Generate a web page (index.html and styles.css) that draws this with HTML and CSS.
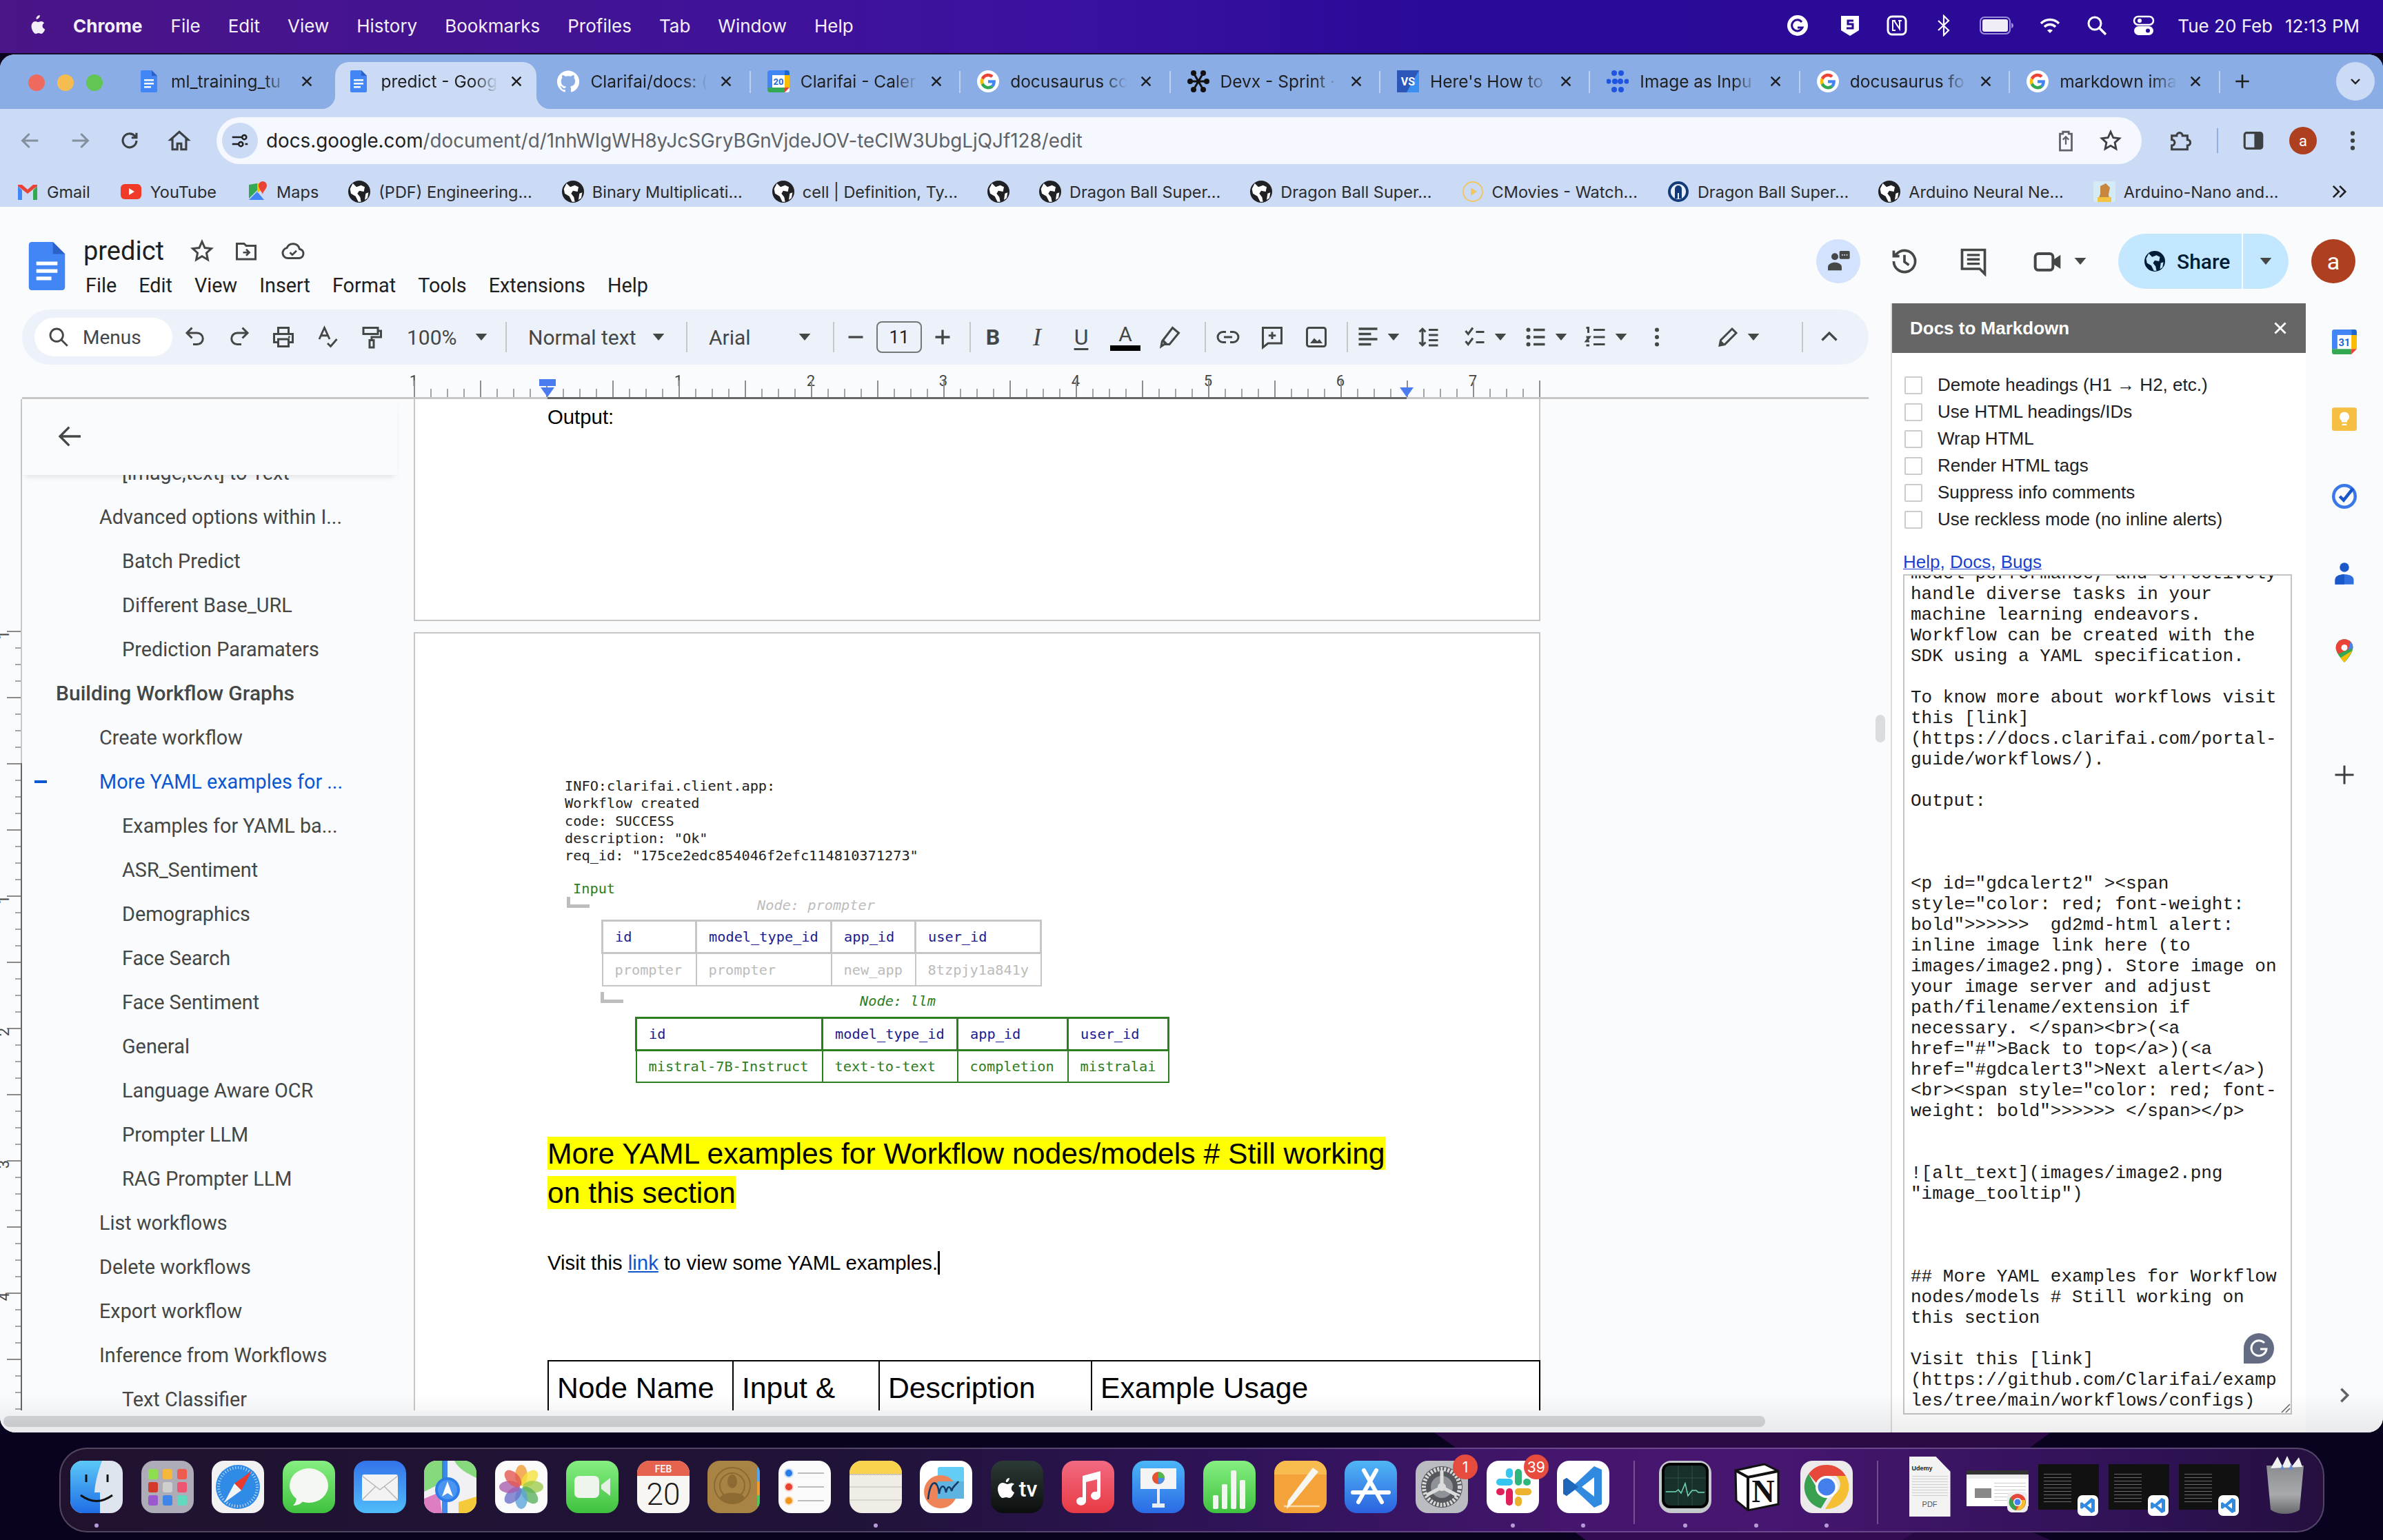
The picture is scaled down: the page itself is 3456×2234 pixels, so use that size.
FILE: index.html
```html
<!DOCTYPE html>
<html lang="en">
<head>
  <meta charset="UTF-8" />
  <title>predict - Google Docs</title>
  <link rel="stylesheet" href="styles.css">
</head>
<body>
  <svg class="sprite" xmlns="http://www.w3.org/2000/svg">
    <symbol id="i-g" viewBox="0 0 48 48">
      <circle cx="24" cy="24" r="24" fill="#fff"/>
      <g transform="translate(7 7) scale(.71)">
        <path fill="#EA4335" d="M24 9.5c3.54 0 6.71 1.22 9.21 3.6l6.85-6.85C35.9 2.38 30.47 0 24 0 14.62 0 6.51 5.38 2.56 13.22l7.98 6.19C12.43 13.72 17.74 9.5 24 9.5z"/>
        <path fill="#4285F4" d="M46.98 24.55c0-1.57-.15-3.09-.38-4.55H24v9.02h12.94c-.58 2.96-2.26 5.48-4.78 7.18l7.73 6c4.51-4.18 7.09-10.36 7.09-17.65z"/>
        <path fill="#FBBC05" d="M10.53 28.59c-.48-1.45-.76-2.99-.76-4.59s.27-3.14.76-4.59l-7.98-6.19C.92 16.46 0 20.12 0 24c0 3.88.92 7.54 2.56 10.78l7.97-6.19z"/>
        <path fill="#34A853" d="M24 48c6.48 0 11.93-2.13 15.89-5.81l-7.73-6c-2.15 1.45-4.92 2.3-8.16 2.3-6.26 0-11.57-4.22-13.47-9.91l-7.98 6.19C6.51 42.62 14.62 48 24 48z"/>
      </g>
    </symbol>
    <symbol id="i-doc" viewBox="0 0 24 32">
      <path fill="#4285f4" d="M2 0h14l8 8v22a2 2 0 0 1-2 2H2a2 2 0 0 1-2-2V2a2 2 0 0 1 2-2z"/>
      <path fill="#2b62c8" d="M16 0l8 8h-8z"/>
      <path fill="#fff" d="M5 13h14v2.400H5zM5 18h14v2.400H5zM5 23h10v2.400H5z"/>
    </symbol>
    <symbol id="i-globe" viewBox="0 0 24 24">
      <circle cx="12" cy="12" r="12" fill="#202124"/>
      <path fill="#fff" d="M5 3l4 4 5-2 4 2-1 5-5-1-2 3 3 4 1 5-3 0-3-6-5-3-1-5zM19 14l3-1-1 6-3 2z"/>
    </symbol>
    <symbol id="i-share-globe" viewBox="0 0 24 24">
      <circle cx="12" cy="12" r="12" fill="#001d35"/>
      <path fill="#c2e7ff" d="M5 3l4 4 5-2 4 2-1 5-5-1-2 3 3 4 1 5-3 0-3-6-5-3-1-5zM19 14l3-1-1 6-3 2z"/>
    </symbol>
    <symbol id="i-vsc" viewBox="0 0 30 30">
      <rect width="30" height="30" rx="7" fill="#fff"/>
      <path d="M20 4l5 2.500v17L20 26 10 17l-4 3-2-1.500v-7L6 10l4 3z" fill="#2f8ae0"/>
      <path d="M20 10.500v9L14 15z" fill="#fff"/>
    </symbol>
    <symbol id="i-caret" viewBox="0 0 10 6"><path d="M0 0h10L5 6z" fill="#444746"/></symbol>
    <symbol id="i-x" viewBox="0 0 24 24"><path d="M5 5l14 14M19 5L5 19" fill="none" stroke="currentColor" stroke-width="2.600"/></symbol>
    <symbol id="i-star" viewBox="0 0 24 24"><path d="M12 3l2.700 6 6.300.7-4.700 4.300 1.300 6.500L12 17.200 6.400 20.500 7.700 14 3 9.700 9.300 9z" fill="none" stroke="currentColor" stroke-width="2"/></symbol>
  </svg>

  <div class="menubar">
    <svg class="apple" viewBox="0 0 24 28"><path fill="#f3eff8" d="M16.500 0c.2 2.900-2.200 5.600-5 5.400-.3-2.800 2.300-5.300 5-5.400zM20 14.800c0-2.800 2.300-4.100 2.400-4.200-1.300-1.900-3.300-2.200-4-2.200-1.700-.2-3.300 1-4.200 1-.9 0-2.200-1-3.600-1-1.900 0-3.600 1.100-4.600 2.800-2 3.400-.5 8.400 1.400 11.200 1 1.300 2.100 2.900 3.600 2.800 1.400-.1 2-.9 3.700-.9s2.200.9 3.700.9 2.500-1.400 3.500-2.800c1.100-1.600 1.500-3.100 1.600-3.200-.1 0-3.500-1.300-3.500-4.400z"/></svg>
    <span class="mb-app">Chrome</span>
    <span class="mb-item">File</span>
    <span class="mb-item">Edit</span>
    <span class="mb-item">View</span>
    <span class="mb-item">History</span>
    <span class="mb-item">Bookmarks</span>
    <span class="mb-item">Profiles</span>
    <span class="mb-item">Tab</span>
    <span class="mb-item">Window</span>
    <span class="mb-item">Help</span>
    <div class="mb-status">
      <svg class="st st-first" viewBox="0 0 32 32"><circle cx="16" cy="16" r="15" fill="#fff"/><path d="M22 11a8 8 0 1 0 1 8h-7" fill="none" stroke="#2b0a96" stroke-width="3"/></svg>
      <svg class="st" viewBox="0 0 32 32"><path fill="#fff" d="M3 2h26v21l-13 8-13-8z"/><path d="M21 9h-8v5h7v6h-9" fill="none" stroke="#2b0a96" stroke-width="3"/></svg>
      <svg class="st" viewBox="0 0 32 32"><rect x="3" y="3" width="26" height="26" rx="6" fill="none" stroke="#fff" stroke-width="3"/><path d="M10 23V9h2l8 12V9M10 9h4M18 9h5M9 23h5" fill="none" stroke="#fff" stroke-width="2"/></svg>
      <svg class="st" viewBox="0 0 32 32"><path d="M8 9l15 14-7 7V2l7 7L8 23" fill="none" stroke="#fff" stroke-width="2.200"/></svg>
      <svg class="st-batt" viewBox="0 0 50 26"><rect x="1" y="1" width="43" height="24" rx="6" fill="none" stroke="#9a8fd8" stroke-width="2"/><rect x="4" y="4" width="37" height="18" rx="3" fill="#f1edf7"/><path d="M46 9c2 1 3 2 3 4s-1 3-3 4z" fill="#9a8fd8"/></svg>
      <svg class="st" viewBox="0 0 32 32"><path d="M3 13a18 18 0 0 1 26 0M8 18a11 11 0 0 1 16 0" fill="none" stroke="#fff" stroke-width="3.400"/><path d="M12 23a6 6 0 0 1 8 0l-4 4z" fill="#fff"/></svg>
      <svg class="st" viewBox="0 0 32 32"><circle cx="13" cy="13" r="9" fill="none" stroke="#fff" stroke-width="3"/><path d="M20 20l9 9" stroke="#fff" stroke-width="3.400"/></svg>
      <svg class="st" viewBox="0 0 32 32"><rect x="2" y="3" width="28" height="12" rx="6" fill="none" stroke="#fff" stroke-width="2.500"/><circle cx="10" cy="9" r="3" fill="#fff"/><rect x="2" y="17" width="28" height="13" rx="6.500" fill="#fff"/><circle cx="22" cy="23.500" r="3" fill="#2b0a96"/></svg>
      <span class="mb-clock">Tue 20 Feb</span>
      <span class="mb-clock">12:13 PM</span>
    </div>
  </div>

  <div class="window">
    <div class="tabstrip">
      <div class="lights"><i class="red"></i><i class="yellow"></i><i class="green"></i></div>
      <div class="tabs">
        <div class="tab"><svg class="fav"><use href="#i-doc"/></svg><span class="tab-title">ml_training_tu</span><svg class="tab-x"><use href="#i-x"/></svg></div>
        <div class="tab active"><svg class="fav"><use href="#i-doc"/></svg><span class="tab-title">predict - Goog</span><svg class="tab-x"><use href="#i-x"/></svg></div>
        <div class="tab sep"><svg class="fav" viewBox="0 0 24 24"><path fill="#fff" d="M12 .3a12 12 0 0 0-3.800 23.400c.6.1.8-.3.8-.6v-2c-3.300.7-4-1.600-4-1.600-.6-1.400-1.400-1.800-1.400-1.800-1-.7.1-.7.1-.7 1.200 0 1.900 1.200 1.900 1.200 1 1.800 2.800 1.300 3.500 1 0-.8.4-1.300.7-1.600-2.700-.3-5.500-1.300-5.500-6 0-1.200.5-2.300 1.300-3.100-.2-.4-.6-1.600 0-3.200 0 0 1-.3 3.400 1.200a11.500 11.500 0 0 1 6 0c2.300-1.500 3.300-1.200 3.300-1.200.6 1.600.2 2.800 0 3.200.9.8 1.300 1.900 1.300 3.200 0 4.600-2.800 5.600-5.500 5.900.5.4.9 1 .9 2.200v3.300c0 .3.1.7.8.6A12 12 0 0 0 12 .3"/></svg><span class="tab-title">Clarifai/docs: (</span><svg class="tab-x"><use href="#i-x"/></svg></div>
        <div class="tab sep"><svg class="fav" viewBox="0 0 32 32"><rect width="32" height="32" rx="3" fill="#fff"/><path fill="#4285f4" d="M0 3a3 3 0 0 1 3-3h22v7H7v18H0z"/><path fill="#34a853" d="M0 25h25v7H3a3 3 0 0 1-3-3z"/><path fill="#fbbc04" d="M25 7h7v18h-7z"/><path fill="#ea4335" d="M25 25h7l-7 7z"/><path fill="#1967d2" d="M25 0h4a3 3 0 0 1 3 3v4h-7z"/><text x="16" y="21" class="cal-num">20</text></svg><span class="tab-title">Clarifai - Caler</span><svg class="tab-x"><use href="#i-x"/></svg></div>
        <div class="tab sep"><svg class="fav"><use href="#i-g"/></svg><span class="tab-title">docusaurus cc</span><svg class="tab-x"><use href="#i-x"/></svg></div>
        <div class="tab sep"><svg class="fav" viewBox="0 0 32 32"><path d="M9 4l14 24M23 4L9 28M5 16h22" stroke="#111" stroke-width="3"/><g fill="#111"><circle cx="9" cy="4" r="4"/><circle cx="23" cy="4" r="4"/><circle cx="4" cy="16" r="4"/><circle cx="28" cy="16" r="4"/><circle cx="9" cy="28" r="4"/><circle cx="23" cy="28" r="4"/></g></svg><span class="tab-title">Devx - Sprint ·</span><svg class="tab-x"><use href="#i-x"/></svg></div>
        <div class="tab sep"><svg class="fav" viewBox="0 0 32 32"><rect width="32" height="32" fill="#3a8ff0"/><path d="M0 0h32L14 32H0z" fill="#2c57b8"/><text x="16" y="22" class="vs-num">VS</text></svg><span class="tab-title">Here's How to</span><svg class="tab-x"><use href="#i-x"/></svg></div>
        <div class="tab sep"><svg class="fav" viewBox="0 0 32 32"><g fill="#1d55e0"><circle cx="11" cy="4" r="4"/><circle cx="21" cy="4" r="4"/><circle cx="3" cy="16" r="3.500"/><circle cx="12" cy="16" r="4"/><circle cx="20" cy="16" r="4"/><circle cx="29" cy="16" r="3.500"/><circle cx="11" cy="28" r="4"/><circle cx="21" cy="28" r="4"/></g></svg><span class="tab-title">Image as Inpu</span><svg class="tab-x"><use href="#i-x"/></svg></div>
        <div class="tab sep"><svg class="fav"><use href="#i-g"/></svg><span class="tab-title">docusaurus fo</span><svg class="tab-x"><use href="#i-x"/></svg></div>
        <div class="tab sep"><svg class="fav"><use href="#i-g"/></svg><span class="tab-title">markdown ima</span><svg class="tab-x"><use href="#i-x"/></svg></div>
      </div>
      <svg class="newtab" viewBox="0 0 24 24"><path d="M12 3v18M3 12h18" stroke="#1f1f1f" stroke-width="2.400"/></svg>
      <div class="tab-more"><svg viewBox="0 0 24 24"><path d="M6 9l6 6 6-6" fill="none" stroke="#1f1f1f" stroke-width="2.400"/></svg></div>
    </div>

    <div class="navbar">
      <svg class="nav faded" viewBox="0 0 24 24"><path d="M20 12H5M11 5l-7 7 7 7" fill="none" stroke="currentColor" stroke-width="2.200"/></svg>
      <svg class="nav faded" viewBox="0 0 24 24"><path d="M4 12h15M13 5l7 7-7 7" fill="none" stroke="currentColor" stroke-width="2.200"/></svg>
      <svg class="nav" viewBox="0 0 24 24"><path d="M19 12a7 7 0 1 1-2-5l2 2M19 4v5h-5" fill="none" stroke="currentColor" stroke-width="2.200"/></svg>
      <svg class="nav" viewBox="0 0 24 24"><path d="M12 3l9 8h-2v10h-5v-6h-4v6H5V11H3z" fill="none" stroke="currentColor" stroke-width="2.200"/></svg>
      <div class="omnibox">
        <span class="site-ic"><svg viewBox="0 0 24 24"><path d="M3 8h11M18 16h3M3 16h7" stroke="#1f1f1f" stroke-width="2"/><circle cx="17" cy="8" r="2.500" fill="none" stroke="#1f1f1f" stroke-width="2"/><circle cx="13" cy="16" r="2.500" fill="none" stroke="#1f1f1f" stroke-width="2"/></svg></span>
        <span class="url">docs.google.com<span class="url-path">/document/d/1nhWIgWH8yJcSGryBGnVjdeJOV-teCIW3UbgLjQJf128/edit</span></span>
        <svg class="omni-ic" viewBox="0 0 24 24"><path d="M6 5h3V3h6v2h3v17H6z" fill="none" stroke="#5f6368" stroke-width="2"/><path d="M12 16V8M9 11l3-3 3 3" fill="none" stroke="#5f6368" stroke-width="1.600"/></svg>
        <svg class="omni-ic star-ic"><use href="#i-star"/></svg>
      </div>
      <svg class="nav puzzle" viewBox="0 0 24 24"><path d="M4 7h5a3 3 0 0 1 6 0h5v4a3 3 0 0 1 0 6v4H4v-4a3 3 0 0 0 0-6z" fill="none" stroke="currentColor" stroke-width="2.200"/></svg>
      <i class="nav-sep"></i>
      <svg class="nav" viewBox="0 0 24 24"><rect x="3" y="4" width="18" height="16" rx="2" fill="none" stroke="currentColor" stroke-width="2.200"/><rect x="13" y="4" width="8" height="16" fill="currentColor"/></svg>
      <span class="avatar small">a</span>
      <svg class="nav dots" viewBox="0 0 24 24"><g fill="currentColor"><circle cx="12" cy="4.500" r="2.200"/><circle cx="12" cy="12" r="2.200"/><circle cx="12" cy="19.500" r="2.200"/></g></svg>
    </div>

    <div class="bookmarks">
      <span class="bm"><svg class="bm-ic" viewBox="0 0 32 32"><path fill="#4285f4" d="M2 8v20h6V14z"/><path fill="#34a853" d="M24 14v14h6V8z"/><path fill="#ea4335" d="M2 8l14 11L30 8v-2l-6 0-8 7-8-7-6 0z"/></svg>Gmail</span>
      <span class="bm"><svg class="bm-ic" viewBox="0 0 32 32"><rect x="1" y="5" width="30" height="22" rx="6" fill="#f03a27"/><path d="M13 11l8 5-8 5z" fill="#fff"/></svg>YouTube</span>
      <span class="bm"><svg class="bm-ic" viewBox="0 0 32 32"><path fill="#35a853" d="M4 6l12-2v10L4 26z"/><path fill="#4285f4" d="M4 28l12-12 10 12z"/><path fill="#fbbc04" d="M16 4h8v8l-8 6z"/><path fill="#ea4335" d="M24 1a6 6 0 0 1 6 6c0 5-6 9-6 13-1-4-6-8-6-13a6 6 0 0 1 6-6z"/></svg>Maps</span>
      <span class="bm"><svg class="bm-ic"><use href="#i-globe"/></svg>(PDF) Engineering...</span>
      <span class="bm"><svg class="bm-ic"><use href="#i-globe"/></svg>Binary Multiplicati...</span>
      <span class="bm"><svg class="bm-ic"><use href="#i-globe"/></svg>cell | Definition, Ty...</span>
      <span class="bm"><svg class="bm-ic"><use href="#i-globe"/></svg></span>
      <span class="bm"><svg class="bm-ic"><use href="#i-globe"/></svg>Dragon Ball Super...</span>
      <span class="bm"><svg class="bm-ic"><use href="#i-globe"/></svg>Dragon Ball Super...</span>
      <span class="bm"><svg class="bm-ic" viewBox="0 0 32 32"><circle cx="16" cy="16" r="14" fill="none" stroke="#efc663" stroke-width="2"/><path d="M13 10l9 6-9 6z" fill="#efc663"/></svg>CMovies - Watch...</span>
      <span class="bm"><svg class="bm-ic" viewBox="0 0 32 32"><circle cx="16" cy="16" r="15" fill="#123a78"/><circle cx="16" cy="16" r="11" fill="#e8eefb"/><path d="M11 26V12a5 5 0 0 1 10 0v14h-4v-8h-2v8z" fill="#123a78"/></svg>Dragon Ball Super...</span>
      <span class="bm"><svg class="bm-ic"><use href="#i-globe"/></svg>Arduino Neural Ne...</span>
      <span class="bm"><svg class="bm-ic" viewBox="0 0 32 32"><rect y="1" width="32" height="30" rx="3" fill="#d4eaf4"/><path d="M10 8l8-4 6 6-2 10 2 11H6l4-12z" fill="#c7853e"/><path d="M6 24h20v7H6z" fill="#f3c343"/></svg>Arduino-Nano and...</span>
      <svg class="bm-more" viewBox="0 0 24 24"><path d="M5 5l7 7-7 7M13 5l7 7-7 7" fill="none" stroke="#1f1f1f" stroke-width="2.200"/></svg>
    </div>

    <div class="docs">
      <header class="docs-head">
        <svg class="docs-logo"><use href="#i-doc"/></svg>
        <div class="docs-titles">
          <div class="docs-title">
            <span class="doc-name">predict</span>
            <svg class="head-ic"><use href="#i-star"/></svg>
            <svg class="head-ic" viewBox="0 0 24 24"><path d="M3 5h7l2 2h9v13H3z" fill="none" stroke="currentColor" stroke-width="2"/><path d="M9 13.500h6M12 10.500l3 3-3 3" fill="none" stroke="currentColor" stroke-width="1.800"/></svg>
            <svg class="head-ic" viewBox="0 0 24 24"><path d="M7 19a5 5 0 0 1-1-9.900 6.500 6.500 0 0 1 12.300 1A4.500 4.500 0 0 1 18 19z" fill="none" stroke="currentColor" stroke-width="2"/><path d="M9 13.500l2.300 2.300 4-4" fill="none" stroke="currentColor" stroke-width="1.800"/></svg>
          </div>
          <nav class="docs-menu">
            <span>File</span><span>Edit</span><span>View</span><span>Insert</span><span>Format</span><span>Tools</span><span>Extensions</span><span>Help</span>
          </nav>
        </div>
        <div class="head-right">
          <span class="presence"><svg viewBox="0 0 24 24"><circle cx="9" cy="8" r="3" fill="#444746"/><path d="M3 20v-3c0-2.500 3-4 6-4s6 1.500 6 4v3z" fill="#444746"/><rect x="13" y="3" width="9" height="7" rx="1" fill="#444746"/><path d="M15 6.500h5" stroke="#d3e3fd" stroke-dasharray="1 1"/></svg></span>
          <svg class="hr-ic hist" viewBox="0 0 24 24"><path d="M3.500 12a8.500 8.500 0 1 0 2.700-6.200L3.500 8M3.500 3.500V8H8M12 7v5.500l3.500 2.500" fill="none" stroke="#444746" stroke-width="2"/></svg>
          <svg class="hr-ic cmt" viewBox="0 0 24 24"><path d="M3 3h18v19l-4-4H3z" fill="none" stroke="#444746" stroke-width="2"/><path d="M7 7h10M7 10.500h10M7 14h10" stroke="#444746" stroke-width="1.800"/></svg>
          <svg class="hr-ic meet" viewBox="0 0 24 24"><rect x="2" y="6" width="14" height="13" rx="2.500" fill="none" stroke="#444746" stroke-width="2.200"/><path d="M16 11l6-4v11l-6-4z" fill="#444746"/></svg>
          <svg class="caret meet-caret"><use href="#i-caret"/></svg>
          <div class="share">
            <span class="share-main"><svg class="share-ic"><use href="#i-share-globe"/></svg>Share</span>
            <span class="share-arrow"><svg class="caret"><use href="#i-caret"/></svg></span>
          </div>
          <span class="avatar">a</span>
        </div>
      </header>

      <div class="docs-main">
        <div class="editor">
          <div class="toolbar">
            <div class="menus"><svg viewBox="0 0 24 24"><circle cx="10" cy="10" r="6.500" fill="none" stroke="#444746" stroke-width="2"/><path d="M15 15l6 6" stroke="#444746" stroke-width="2"/></svg>Menus</div>
            <span class="tb"><svg viewBox="0 0 24 24"><path d="M9 13L4 8l5-5M4 8h10a5.500 5.500 0 0 1 0 11H10" fill="none" stroke="#444746" stroke-width="2"/></svg></span>
            <span class="tb"><svg viewBox="0 0 24 24"><path d="M15 13l5-5-5-5M20 8H10a5.500 5.500 0 0 0 0 11h4" fill="none" stroke="#444746" stroke-width="2"/></svg></span>
            <span class="tb"><svg viewBox="0 0 24 24"><path d="M7 8V3h10v5M7 17H3V9h18v8h-4M7 14h10v7H7z" fill="none" stroke="#444746" stroke-width="2"/><circle cx="17.500" cy="11.800" r="1" fill="#444746"/></svg></span>
            <span class="tb"><svg viewBox="0 0 24 24"><path d="M4 14L9 3l5 11M6 10.500h6M12 18l3 3 6-7" fill="none" stroke="#444746" stroke-width="1.900"/></svg></span>
            <span class="tb"><svg viewBox="0 0 24 24"><path d="M4 3h14v6H4zM18 6h3v6h-9v3M10 15h4v7h-4z" fill="none" stroke="#444746" stroke-width="2"/></svg></span>
            <span class="tb-text zoom-sel">100%<svg class="caret"><use href="#i-caret"/></svg></span>
            <i class="sep-v"></i>
            <span class="tb-text style-sel">Normal text<svg class="caret"><use href="#i-caret"/></svg></span>
            <i class="sep-v"></i>
            <span class="tb-text font-sel">Arial<svg class="caret"><use href="#i-caret"/></svg></span>
            <i class="sep-v"></i>
            <span class="tb tb-sm"><svg viewBox="0 0 24 24"><path d="M5 12h14" stroke="#444746" stroke-width="2.200"/></svg></span>
            <span class="size-box">11</span>
            <span class="tb tb-sm"><svg viewBox="0 0 24 24"><path d="M5 12h14M12 5v14" stroke="#444746" stroke-width="2.200"/></svg></span>
            <i class="sep-v sep-fmt"></i>
            <span class="tb tb-fmt fmt-b">B</span>
            <span class="tb tb-fmt fmt-i">I</span>
            <span class="tb tb-fmt fmt-u">U</span>
            <span class="tb tb-fmt fmt-a">A</span>
            <span class="tb"><svg viewBox="0 0 24 24"><path d="M15 3l6 5-9 11H7l-3 2 1-5z" fill="none" stroke="#444746" stroke-width="2"/><path d="M5 16l3 4 3-1-5-5z" fill="#444746"/></svg></span>
            <i class="sep-v sep-ins"></i>
            <span class="tb"><svg viewBox="0 0 24 24"><path d="M10 7H7a5 5 0 0 0 0 10h3M14 7h3a5 5 0 0 1 0 10h-3M8 12h8" fill="none" stroke="#444746" stroke-width="2"/></svg></span>
            <span class="tb"><svg viewBox="0 0 24 24"><path d="M3 3h18v15H8l-5 4z" fill="none" stroke="#444746" stroke-width="2"/><path d="M12 7v7M8.500 10.500h7" stroke="#444746" stroke-width="2"/></svg></span>
            <span class="tb"><svg viewBox="0 0 24 24"><rect x="3" y="3" width="18" height="18" rx="2" fill="none" stroke="#444746" stroke-width="2"/><path d="M6 18l4-5 3 3 2-2 3 4z" fill="#444746"/></svg></span>
            <i class="sep-v sep-align"></i>
            <span class="tb-dd"><svg viewBox="0 0 24 24"><path d="M3 4h18M3 9h12M3 14h18M3 19h12" stroke="#444746" stroke-width="2.200"/></svg><svg class="caret"><use href="#i-caret"/></svg></span>
            <span class="tb"><svg viewBox="0 0 24 24"><path d="M6 4v16M3 7l3-3 3 3M3 17l3 3 3-3M12 5h9M12 10h9M12 15h9M12 20h9" fill="none" stroke="#444746" stroke-width="2"/></svg></span>
            <span class="tb-dd dd-gap"><svg viewBox="0 0 24 24"><path d="M3 6l2.500 3L10 3M3 16l2.500 3L10 13M13 7h8M13 17h8" fill="none" stroke="#444746" stroke-width="2"/></svg><svg class="caret"><use href="#i-caret"/></svg></span>
            <span class="tb-dd dd-wide"><svg viewBox="0 0 24 24"><g fill="#444746"><circle cx="5" cy="5" r="2"/><circle cx="5" cy="12" r="2"/><circle cx="5" cy="19" r="2"/></g><path d="M10 5h11M10 12h11M10 19h11" stroke="#444746" stroke-width="2.200"/></svg><svg class="caret"><use href="#i-caret"/></svg></span>
            <span class="tb-dd dd-wide"><svg viewBox="0 0 24 24"><path d="M3 3h2v5M3 12h3l-3 4h3M3 20h3M10 5h11M10 12h11M10 19h11" fill="none" stroke="#444746" stroke-width="2"/></svg><svg class="caret"><use href="#i-caret"/></svg></span>
            <span class="tb tb-dots"><svg viewBox="0 0 24 24"><g fill="#444746"><circle cx="12" cy="5" r="2"/><circle cx="12" cy="12" r="2"/><circle cx="12" cy="19" r="2"/></g></svg></span>
            <span class="tb-dd dd-pencil"><svg viewBox="0 0 24 24"><path d="M4 20l1-5L16 4l4 4L9 19z" fill="none" stroke="#444746" stroke-width="2"/><path d="M4 20l1-5 4 4z" fill="#444746"/></svg><svg class="caret"><use href="#i-caret"/></svg></span>
            <i class="sep-v sep-last"></i>
            <span class="tb"><svg viewBox="0 0 24 24"><path d="M5 15l7-7 7 7" fill="none" stroke="#444746" stroke-width="2.200"/></svg></span>
          </div>

          <div class="ruler">
            <div class="ruler-nums"><span>1</span><span></span><span>1</span><span>2</span><span>3</span><span>4</span><span>5</span><span>6</span><span>7</span></div>
            <div class="ruler-ticks"></div>
            <i class="ruler-active"></i>
            <i class="indent-left"></i>
            <i class="indent-right"></i>
          </div>

          <div class="workspace">
            <div class="vruler">
              <div class="vruler-nums"><span><b>1</b></span><span></span><span><b>1</b></span><span><b>2</b></span><span><b>3</b></span><span><b>4</b></span></div>
            </div>
            <aside class="outline">
              <div class="outline-head"><svg viewBox="0 0 24 24"><path d="M21 12H4M11 4l-8 8 8 8" fill="none" stroke="#444746" stroke-width="2"/></svg></div>
              <ul class="outline-list">
                <li class="l3">[image,text] to Text</li>
                <li class="l2">Advanced options within I...</li>
                <li class="l3">Batch Predict</li>
                <li class="l3">Different Base_URL</li>
                <li class="l3">Prediction Paramaters</li>
                <li class="l1">Building Workflow Graphs</li>
                <li class="l2">Create workflow</li>
                <li class="l2 current">More YAML examples for ...</li>
                <li class="l3">Examples for YAML ba...</li>
                <li class="l3">ASR_Sentiment</li>
                <li class="l3">Demographics</li>
                <li class="l3">Face Search</li>
                <li class="l3">Face Sentiment</li>
                <li class="l3">General</li>
                <li class="l3">Language Aware OCR</li>
                <li class="l3">Prompter LLM</li>
                <li class="l3">RAG Prompter LLM</li>
                <li class="l2">List workflows</li>
                <li class="l2">Delete workflows</li>
                <li class="l2">Export workflow</li>
                <li class="l2">Inference from Workflows</li>
                <li class="l3">Text Classifier</li>
              </ul>
            </aside>
            <main class="pages">
              <section class="page page-one"><p class="body-text">Output:</p></section>
              <section class="page page-two">
                <div class="diagram">
                  <pre class="dg-log">INFO:clarifai.client.app:
Workflow created
code: SUCCESS
description: "Ok"
req_id: "175ce2edc854046f2efc114810371273"</pre>
                  <div class="dg-input">Input</div>
                  <div class="dg-head dg-head-a"><i class="dg-corner"></i><em>Node: prompter</em></div>
                  <table class="dg-table dg-gray">
                    <colgroup><col class="ca1"><col class="ca2"><col class="ca3"><col class="ca4"></colgroup>
                    <tr><th>id</th><th>model_type_id</th><th>app_id</th><th>user_id</th></tr>
                    <tr><td>prompter</td><td>prompter</td><td>new_app</td><td>8tzpjy1a841y</td></tr>
                  </table>
                  <div class="dg-head dg-head-b"><i class="dg-corner"></i><em>Node: llm</em></div>
                  <table class="dg-table dg-green">
                    <colgroup><col class="cb1"><col class="cb2"><col class="cb3"><col class="cb4"></colgroup>
                    <tr><th>id</th><th>model_type_id</th><th>app_id</th><th>user_id</th></tr>
                    <tr><td>mistral-7B-Instruct</td><td>text-to-text</td><td>completion</td><td>mistralai</td></tr>
                  </table>
                </div>
                <h2 class="doc-h2"><span>More YAML examples for Workflow nodes/models # Still working on this section</span></h2>
                <p class="body-text visit">Visit this <a href="#">link</a> to view some YAML examples.<i class="text-cursor"></i></p>
                <table class="doc-table">
                  <colgroup><col class="cd1"><col class="cd2"><col class="cd3"><col class="cd4"></colgroup>
                  <tr><td>Node Name</td><td>Input &amp; Output</td><td>Description</td><td>Example Usage</td></tr>
                </table>
              </section>
            </main>
            <i class="doc-thumb"></i>
          </div>
          <div class="hscroll"><i></i></div>
        </div>

        <aside class="addon">
          <div class="addon-head"><span>Docs to Markdown</span><svg><use href="#i-x"/></svg></div>
          <div class="addon-opts">
            <label><i></i>Demote headings (H1 → H2, etc.)</label>
            <label><i></i>Use HTML headings/IDs</label>
            <label><i></i>Wrap HTML</label>
            <label><i></i>Render HTML tags</label>
            <label><i></i>Suppress info comments</label>
            <label><i></i>Use reckless mode (no inline alerts)</label>
          </div>
          <div class="addon-links"><a href="#">Help</a>, <a href="#">Docs</a>, <a href="#">Bugs</a></div>
          <div class="addon-output">
<pre>model performance, and effectively
handle diverse tasks in your
machine learning endeavors.
Workflow can be created with the
SDK using a YAML specification.

To know more about workflows visit
this [link]
(https://docs.clarifai.com/portal-
guide/workflows/).

Output:



&lt;p id="gdcalert2" &gt;&lt;span
style="color: red; font-weight:
bold"&gt;&gt;&gt;&gt;&gt;&gt;  gd2md-html alert:
inline image link here (to
images/image2.png). Store image on
your image server and adjust
path/filename/extension if
necessary. &lt;/span&gt;&lt;br&gt;(&lt;a
href="#"&gt;Back to top&lt;/a&gt;)(&lt;a
href="#gdcalert3"&gt;Next alert&lt;/a&gt;)
&lt;br&gt;&lt;span style="color: red; font-
weight: bold"&gt;&gt;&gt;&gt;&gt;&gt; &lt;/span&gt;&lt;/p&gt;


![alt_text](images/image2.png
"image_tooltip")



## More YAML examples for Workflow
nodes/models # Still working on
this section

Visit this [link]
(https://github.com/Clarifai/examp
les/tree/main/workflows/configs)</pre>
            <svg class="grammarly" viewBox="0 0 44 44"><path d="M0 22a22 22 0 1 1 22 22H0z" fill="#646c84"/><path d="M30 14a11 11 0 1 0 3 9h-9" fill="none" stroke="#fff" stroke-width="3"/></svg>
            <svg class="grip" viewBox="0 0 16 16"><path d="M15 3L3 15M15 9l-6 6" stroke="#666" stroke-width="1.500"/></svg>
          </div>
        </aside>

        <aside class="side-strip">
          <svg viewBox="0 0 32 32"><rect width="32" height="32" rx="3" fill="#fff"/><path fill="#4285f4" d="M0 3a3 3 0 0 1 3-3h22v7H7v18H0z"/><path fill="#34a853" d="M0 25h25v7H3a3 3 0 0 1-3-3z"/><path fill="#fbbc04" d="M25 7h7v18h-7z"/><path fill="#ea4335" d="M25 25h7l-7 7z"/><path fill="#1967d2" d="M25 0h4a3 3 0 0 1 3 3v4h-7z"/><text x="16" y="21" class="cal-num">31</text></svg>
          <svg viewBox="0 0 32 32"><rect y="1" width="32" height="30" rx="3" fill="#f4bf42"/><path d="M16 7a6 6 0 0 1 3.500 11v2h-7v-2A6 6 0 0 1 16 7zM13 22h6v2h-6z" fill="#fff"/></svg>
          <svg viewBox="0 0 32 32"><circle cx="16" cy="16" r="14" fill="none" stroke="#3b78e7" stroke-width="4"/><circle cx="16" cy="16" r="8.500" fill="#fff"/><path d="M10 16l5 5L27 6" fill="none" stroke="#1a57c8" stroke-width="4"/></svg>
          <svg viewBox="0 0 32 32"><circle cx="16" cy="8" r="6" fill="#1a57c8"/><path d="M4 30v-6c0-5 6-7 12-7s12 2 12 7v6z" fill="#2f6fe0"/><path d="M4 30v-6c0-5 6-7 12-7v13z" fill="#1a57c8"/></svg>
          <svg viewBox="0 0 32 32"><path d="M16 1a11 11 0 0 1 11 11c0 8-11 19-11 19S5 20 5 12A11 11 0 0 1 16 1z" fill="#34a853"/><path d="M16 1a11 11 0 0 1 11 11L8 20C6 17 5 14 5 12A11 11 0 0 1 16 1z" fill="#ea4335"/><path d="M26 16c-2 5-7 11-10 15-1-1-3-3-5-6z" fill="#fbbc04"/><path d="M24 4c2 2 3 5 3 8l-6 3z" fill="#4285f4"/><circle cx="16" cy="12" r="4" fill="#fff"/></svg>
          <svg class="strip-plus" viewBox="0 0 24 24"><path d="M12 3v18M3 12h18" stroke="#3c4043" stroke-width="2"/></svg>
          <svg class="strip-chev" viewBox="0 0 24 24"><path d="M8 4l8 8-8 8" fill="none" stroke="#5f6368" stroke-width="3"/></svg>
        </aside>
      </div>
    </div>
  </div>

  <div class="desktop">
    <svg class="wall" viewBox="0 0 3456 156" preserveAspectRatio="none">
      <path d="M2080 0H2974L2760 156H2300z" fill="#2c0a45"/>
      <path d="M2300 156L2180 70 2700 40 2974 156z" fill="#3a0d5c" opacity=".6"/>
    </svg>
    <div class="dock">
      <div class="app dot"><svg viewBox="0 0 76 76"><rect width="76" height="76" fill="#dfe5ee"/><path d="M0 0h46c-6 16-10 32-11 46h8v30H0z" fill="url(#g-finder)"/><path d="M23 20v11M54 20v11" stroke="#111" stroke-width="3"/><path d="M15 50q23 17 46 0" fill="none" stroke="#111" stroke-width="3"/><linearGradient id="g-finder" x1="0" y1="0" x2="0" y2="1"><stop offset="0" stop-color="#5cc8f8"/><stop offset="1" stop-color="#1f6de6"/></linearGradient></svg></div>
      <div class="app"><svg viewBox="0 0 76 76"><rect width="76" height="76" fill="#aeacb6"/><g><rect x="10" y="12" width="14" height="15" rx="3" fill="#8ddf50"/><rect x="31" y="12" width="14" height="15" rx="3" fill="#f6b83b"/><rect x="52" y="12" width="14" height="15" rx="3" fill="#ee5c50"/><rect x="10" y="31" width="14" height="15" rx="3" fill="#d33a2c"/><rect x="31" y="31" width="14" height="15" rx="3" fill="#cfcfcf"/><rect x="52" y="31" width="14" height="15" rx="3" fill="#ee5570"/><rect x="10" y="50" width="14" height="15" rx="3" fill="#9b59d0"/><rect x="31" y="50" width="14" height="15" rx="3" fill="#3f86e8"/><rect x="52" y="50" width="14" height="15" rx="3" fill="#63d8c0"/></g></svg></div>
      <div class="app"><svg viewBox="0 0 76 76"><rect width="76" height="76" fill="#f2f2f2"/><circle cx="38" cy="38" r="32" fill="#2f8be6"/><circle cx="38" cy="38" r="28" fill="none" stroke="#cfe6fb" stroke-width="4" stroke-dasharray="1 3"/><path d="M58 15L33 33l10 10z" fill="#ea3a2e"/><path d="M18 61l15-28 10 10z" fill="#f4f4f4"/></svg></div>
      <div class="app"><svg viewBox="0 0 76 76"><rect width="76" height="76" fill="url(#g-green)"/><linearGradient id="g-green" x1="0" y1="0" x2="0" y2="1"><stop offset="0" stop-color="#86ef82"/><stop offset="1" stop-color="#3fc13f"/></linearGradient><ellipse cx="38" cy="36" rx="28" ry="25" fill="#f4f7f2"/><path d="M20 52c0 7-2 10-5 13 6 0 11-2 15-7z" fill="#f4f7f2"/></svg></div>
      <div class="app"><svg viewBox="0 0 76 76"><rect width="76" height="76" fill="url(#g-mail)"/><linearGradient id="g-mail" x1="0" y1="0" x2="0" y2="1"><stop offset="0" stop-color="#3473ea"/><stop offset="1" stop-color="#4fbdfa"/></linearGradient><rect x="12" y="20" width="52" height="38" rx="3" fill="#f3f3f3"/><path d="M12 22l26 20 26-20M12 57l20-20M64 57L44 37" fill="none" stroke="#b8b8b8" stroke-width="1.500"/></svg></div>
      <div class="app"><svg viewBox="0 0 76 76"><rect width="76" height="76" fill="#f1f1f4"/><path d="M0 0h30v30L0 45z" fill="#86da7d"/><path d="M44 0h32v25C62 18 50 12 44 0z" fill="#86da7d"/><path d="M0 55l22-9 4 30H0z" fill="#dd7ec2"/><path d="M50 60l26-8v24H50z" fill="#f5ca3a"/><path d="M26 0h8v76h-8z" fill="#2c7ce8" opacity=".9"/><circle cx="34" cy="42" r="18" fill="#2c7ce8"/><circle cx="34" cy="42" r="14" fill="#4a94f2"/><path d="M34 30l8 22-8-5-8 5z" fill="#fff"/></svg></div>
      <div class="app"><svg viewBox="0 0 76 76"><rect width="76" height="76" fill="#fbfbfb"/><g fill-opacity=".78"><ellipse cx="38" cy="21" rx="9" ry="15" fill="#f19a2e"/><ellipse cx="50" cy="26" rx="9" ry="15" fill="#f3e23a" transform="rotate(45 50 26)"/><ellipse cx="55" cy="38" rx="15" ry="9" fill="#9ccb4a"/><ellipse cx="50" cy="50" rx="9" ry="15" fill="#59b05c" transform="rotate(-45 50 50)"/><ellipse cx="38" cy="55" rx="9" ry="15" fill="#5aa3d8"/><ellipse cx="26" cy="50" rx="9" ry="15" fill="#6a6fca" transform="rotate(45 26 50)"/><ellipse cx="21" cy="38" rx="15" ry="9" fill="#a85cad"/><ellipse cx="26" cy="26" rx="9" ry="15" fill="#e2564f" transform="rotate(-45 26 26)"/></g></svg></div>
      <div class="app"><svg viewBox="0 0 76 76"><rect width="76" height="76" fill="url(#g-green)"/><rect x="12" y="22" width="36" height="32" rx="7" fill="#eef5ec"/><path d="M51 35l13-10v26L51 41z" fill="#e3efe0"/></svg></div>
      <div class="app"><svg viewBox="0 0 76 76"><rect width="76" height="76" fill="#f7f6f3"/><rect width="76" height="22" fill="#e5624f"/><text x="38" y="17" class="dk-feb">FEB</text><text x="38" y="64" class="dk-day">20</text></svg></div>
      <div class="app"><svg viewBox="0 0 76 76"><rect width="76" height="76" fill="#a98343"/><rect x="72" y="10" width="4" height="20" fill="#56a9e8"/><rect x="72" y="30" width="4" height="20" fill="#f19a2e"/><rect x="72" y="50" width="4" height="16" fill="#57c257"/><g fill="none" stroke="#8c6a32" stroke-width="2"><circle cx="36" cy="36" r="26"/><circle cx="36" cy="36" r="18"/></g><ellipse cx="36" cy="30" rx="7" ry="10" fill="#8c6a32"/><path d="M18 54c4-10 32-10 36 0-8 10-28 10-36 0z" fill="#8c6a32"/></svg></div>
      <div class="app"><svg viewBox="0 0 76 76"><rect width="76" height="76" fill="#fafafa"/><circle cx="15" cy="18" r="6" fill="#2a7ae8" stroke="#c4dafc" stroke-width="2"/><circle cx="15" cy="38" r="6" fill="#e8412f" stroke="#fbd0ca" stroke-width="2"/><circle cx="15" cy="58" r="6" fill="#f0961f" stroke="#fbe2c2" stroke-width="2"/><path d="M28 18h38M28 38h38M28 58h38" stroke="#bdbdbd" stroke-width="2"/></svg></div>
      <div class="app dot"><svg viewBox="0 0 76 76"><rect width="76" height="76" fill="#efede6"/><rect width="76" height="20" fill="#f9d24e"/><path d="M0 20h76" stroke="#b9b5a6" stroke-width="2" stroke-dasharray="1 1"/><path d="M0 38h76M0 57h76" stroke="#d8d5cb" stroke-width="2"/></svg></div>
      <div class="app"><svg viewBox="0 0 76 76"><rect width="76" height="76" fill="#fff"/><rect x="26" y="9" width="38" height="46" rx="3" fill="#63cdf5"/><circle cx="30" cy="45" r="24" fill="#ef8458"/><rect x="26" y="30" width="38" height="25" fill="#5fb3e0"/><path d="M12 56c3-30 14-30 16-8 2-14 8-14 10-2 2-10 6-10 8-2 2-8 6-8 10-14" fill="none" stroke="#143a66" stroke-width="2.500"/></svg></div>
      <div class="app"><svg viewBox="0 0 76 76"><rect width="76" height="76" fill="url(#g-tv)"/><linearGradient id="g-tv" x1="0" y1="0" x2="0" y2="1"><stop offset="0" stop-color="#2c3a36"/><stop offset="1" stop-color="#0c0e0e"/></linearGradient><path d="M25 30c-3 0-5-2-8-2-4 0-7 4-7 9 0 6 4 13 7 13 2 0 3-1 5-1s3 1 5 1c3 0 6-5 7-8-6-3-5-10 0-12-2-2-5-2-9 0zM24 27c2-2 3-4 3-6-3 0-6 3-5 6z" fill="#fff" transform="translate(0 4)"/><text x="54" y="52" class="dk-tv">tv</text></svg></div>
      <div class="app"><svg viewBox="0 0 76 76"><rect width="76" height="76" fill="url(#g-music)"/><linearGradient id="g-music" x1="0" y1="0" x2="0" y2="1"><stop offset="0" stop-color="#f26a82"/><stop offset="1" stop-color="#e83a44"/></linearGradient><path d="M30 22l26-7v36a7 6 0 1 1-5-6V27l-16 4v28a7 6 0 1 1-5-6z" fill="#fff"/></svg></div>
      <div class="app"><svg viewBox="0 0 76 76"><rect width="76" height="76" fill="url(#g-key)"/><linearGradient id="g-key" x1="0" y1="0" x2="0" y2="1"><stop offset="0" stop-color="#4bb6f8"/><stop offset="1" stop-color="#2b6ae6"/></linearGradient><rect x="12" y="11" width="52" height="30" fill="#f4f4f4"/><circle cx="38" cy="25" r="9" fill="#e8532f"/><path d="M38 25V16a9 9 0 0 1 9 9z" fill="#4fb84f"/><path d="M38 25h9a9 9 0 0 1-9 9z" fill="#4b8fe8"/><path d="M36 41h4v22h-4z" fill="#e8eef6"/><rect x="29" y="62" width="18" height="6" fill="#e8eef6"/></svg></div>
      <div class="app"><svg viewBox="0 0 76 76"><rect width="76" height="76" fill="url(#g-green)"/><g fill="#f1f7ee"><rect x="14" y="50" width="8" height="20" rx="2"/><rect x="27" y="34" width="8" height="36" rx="2"/><rect x="40" y="14" width="8" height="56" rx="2"/><rect x="53" y="28" width="8" height="42" rx="2"/></g></svg></div>
      <div class="app"><svg viewBox="0 0 76 76"><rect width="76" height="76" fill="#f4a23a"/><rect width="76" height="20" fill="#f7bb4f"/><path d="M14 66h52" stroke="#fbd9a0" stroke-width="2.500"/><path d="M56 10l8 6-38 46-8 8 2-12z" fill="#f8f6f0"/></svg></div>
      <div class="app"><svg viewBox="0 0 76 76"><rect width="76" height="76" fill="url(#g-app)"/><linearGradient id="g-app" x1="0" y1="0" x2="0" y2="1"><stop offset="0" stop-color="#50b6f5"/><stop offset="1" stop-color="#2a62e0"/></linearGradient><path d="M28 14l26 46M46 14L20 60M12 46h52" fill="none" stroke="#fff" stroke-width="6" stroke-linecap="round"/></svg></div>
      <div class="app"><svg viewBox="0 0 76 76"><rect width="76" height="76" fill="#b9bcc0"/><circle cx="38" cy="38" r="30" fill="#54575b"/><circle cx="38" cy="38" r="26" fill="none" stroke="#d8d8d8" stroke-width="6" stroke-dasharray="3 2"/><circle cx="38" cy="38" r="16" fill="#8f9296"/><path d="M38 14v20M60 50L41 40M16 50l19-10" stroke="#dcdcdc" stroke-width="5"/><circle cx="38" cy="38" r="6" fill="#dcdcdc"/></svg><span class="badge">1</span></div>
      <div class="app dot"><svg viewBox="0 0 76 76"><rect width="76" height="76" fill="#fff"/><rect x="14" y="26" width="24" height="10" rx="5" fill="#36c5f0"/><rect x="28" y="11" width="10" height="14" rx="5" fill="#36c5f0"/><rect x="41" y="12" width="10" height="24" rx="5" fill="#2eb67d"/><rect x="53" y="26" width="11" height="10" rx="5" fill="#2eb67d"/><rect x="41" y="40" width="24" height="10" rx="5" fill="#ecb22e"/><rect x="41" y="52" width="10" height="14" rx="5" fill="#ecb22e"/><rect x="28" y="40" width="10" height="25" rx="5" fill="#e01e5a"/><rect x="14" y="40" width="12" height="10" rx="5" fill="#e01e5a"/></svg><span class="badge">39</span></div>
      <div class="app dot"><svg viewBox="0 0 76 76"><rect width="76" height="76" fill="#fff"/><path d="M54 8l11 5v50l-11 5-28-26-12 9-5-3V28l5-3 12 9z" fill="#2f8ae0"/><path d="M54 24v28L36 38z" fill="#fff"/><path d="M14 25l12 9 5 4-5 4-12 9-5-3V28z" fill="#1e66b8"/></svg></div>
      <i class="dock-sep"></i>
      <div class="app dot"><svg viewBox="0 0 76 76"><rect width="76" height="76" fill="#c6c9cc"/><rect x="4" y="3" width="68" height="66" rx="12" fill="#000"/><rect x="8" y="7" width="60" height="58" rx="8" fill="#18302c"/><path d="M8 25h60M8 45h60M28 7v58M48 7v58" stroke="#2f4f48"/><path d="M10 45h14l4-3 4 5 6-14 4 18 6-8h6l3 3h9" fill="none" stroke="#74d6b4" stroke-width="1.500"/></svg></div>
      <div class="app dot app-bare"><svg viewBox="0 0 76 76"><path d="M8 14l42-9 20 10v48l-44 9-17-14z" fill="#fff" stroke="#111" stroke-width="3"/><path d="M8 14l18 10 44-9M26 24v47" fill="none" stroke="#111" stroke-width="4"/><text x="48" y="60" class="dk-notion">N</text></svg></div>
      <div class="app dot"><svg viewBox="0 0 76 76"><rect width="76" height="76" fill="#eceaea"/><path d="M38 6a32 32 0 0 1 28 16H38a16 16 0 0 0-15 10L12 19A32 32 0 0 1 38 6z" fill="#e6493a"/><path d="M66 22a32 32 0 0 1-30 48l14-22a16 16 0 0 0 2-26z" fill="#f5bf33"/><path d="M12 19l15 26a16 16 0 0 0 12 9L30 69A32 32 0 0 1 12 19z" fill="#38a04f"/><circle cx="38" cy="38" r="16" fill="#fff"/><circle cx="38" cy="38" r="12.500" fill="#4480ec"/></svg></div>
      <i class="dock-sep sep-r"></i>
      <div class="recents">
        <div class="pdf-doc"><span class="pdf-name">Udemy</span><span class="pdf-lines"></span><span class="pdf-label">PDF</span></div>
        <div class="thumb thumb-web"><svg class="thumb-badge" viewBox="0 0 30 30"><rect width="30" height="30" rx="7" fill="#eee"/><circle cx="15" cy="15" r="12" fill="#e6493a"/><path d="M26 12A12 12 0 0 1 13 27l5-8a5 5 0 0 0 1-7z" fill="#f5bf33"/><path d="M5 8l7 12 1 7A12 12 0 0 1 5 8z" fill="#38a04f"/><circle cx="15" cy="15" r="6" fill="#fff"/><circle cx="15" cy="15" r="4.500" fill="#4480ec"/></svg></div>
        <div class="thumb thumb-dark"><svg class="thumb-badge"><use href="#i-vsc"/></svg></div>
        <div class="thumb thumb-dark"><svg class="thumb-badge"><use href="#i-vsc"/></svg></div>
        <div class="thumb thumb-dark"><svg class="thumb-badge"><use href="#i-vsc"/></svg></div>
      </div>
      <div class="trash"><svg viewBox="0 0 66 88"><path d="M6 16l6 64c10 8 32 8 42 0l6-64z" fill="url(#g-trash)"/><linearGradient id="g-trash" x1="0" y1="0" x2="0" y2="1"><stop offset="0" stop-color="#8a8c90"/><stop offset=".6" stop-color="#a8aaae"/><stop offset="1" stop-color="#66686c"/></linearGradient><path d="M12 20L22 3l7 14 7-15 7 15 10-13 5 14z" fill="#f1f1f4"/><path d="M26 22l3-8 3 8zM38 22l4-9 3 9z" fill="#6a8ad0"/></svg></div>
    </div>
  </div>
</body>
</html>
```

FILE: styles.css
```css
* {
  box-sizing: border-box;
}
html, body {
  margin: 0;
  padding: 0;
}
body {
  width: 3456px;
  height: 2234px;
  overflow: hidden;
  background: #090320;
  font-family: Roboto, "Liberation Sans", sans-serif;
  display: flex;
  flex-direction: column;
}
i {
  font-style: normal;
}
svg {
  display: block;
  flex: none;
}
.sprite {
  position: absolute;
  width: 0;
  height: 0;
}

/* mac menu bar */
.menubar {
  height: 77px;
  flex: none;
  display: flex;
  align-items: center;
  padding: 0 34px 3px 40px;
  background: linear-gradient(90deg, #4a1587 0%, #3a11a0 45%, #2a0a98 60%, #2b0a96 100%);
  color: #f4f0fa;
  font-family: Inter, sans-serif;
  font-size: 26px;
}
.apple {
  width: 26px;
  height: 30px;
  margin-right: 40px;
}
.mb-app {
  font-weight: 700;
  margin-right: 41px;
}
.mb-item {
  margin-right: 40px;
}
.mb-status {
  margin-left: auto;
  display: flex;
  align-items: center;
  gap: 36px;
}
.st {
  width: 32px;
  height: 32px;
}
.st-first {
  margin-right: 8px;
}
.st-batt {
  width: 50px;
  height: 26px;
}
.mb-clock {
  margin-left: -3px;
}
.mb-clock + .mb-clock {
  margin-left: -18px;
}

/* chrome window */
.window {
  flex: none;
  height: 2001px;
  display: flex;
  flex-direction: column;
  border-top: 2px solid #14102a;
  border-radius: 22px;
  overflow: hidden;
  position: relative;
  background: #f9fbfd;
}
.window::after {
  content: "";
  position: absolute;
  left: 0;
  right: 0;
  bottom: 0;
  height: 56px;
  background: linear-gradient(180deg, rgba(0,0,0,0), rgba(0,0,0,.07));
  pointer-events: none;
}
.tabstrip {
  height: 79px;
  flex: none;
  display: flex;
  background: #8badE5;
  position: relative;
  padding-left: 176px;
}
.lights {
  position: absolute;
  left: 41px;
  top: 29px;
  display: flex;
  gap: 18px;
}
.lights i {
  width: 24px;
  height: 24px;
  border-radius: 50%;
}
.red { background: #ee6a5f; }
.yellow { background: #f5bd4f; }
.green { background: #62c554; }
.tabs {
  display: flex;
  padding-top: 11px;
}
.tab {
  width: 304.4px;
  height: 68px;
  display: flex;
  align-items: center;
  padding: 0 0 12px 24px;
  position: relative;
  font-family: Inter, sans-serif;
  font-size: 24.5px;
  color: #1f1f1f;
}
.tab.active {
  background: #cbdaf5;
  border-radius: 20px 20px 0 0;
  width: 292px;
  margin: 0 6px;
  padding-left: 18px;
}
.tab.active::before,
.tab.active::after {
  content: "";
  position: absolute;
  bottom: 0;
  width: 20px;
  height: 20px;
}
.tab.active::before {
  left: -20px;
  background: radial-gradient(circle at 0 0, transparent 20px, #cbdaf5 20.5px);
}
.tab.active::after {
  right: -20px;
  background: radial-gradient(circle at 100% 0, transparent 20px, #cbdaf5 20.5px);
}
.tab.sep::after {
  content: "";
  position: absolute;
  right: 0;
  top: 13px;
  width: 2px;
  height: 32px;
  background: #bcd0f2;
}
.fav {
  width: 32px;
  height: 32px;
  margin-right: 16px;
}
.tab-title {
  width: 186px;
  white-space: nowrap;
  -webkit-mask-image: linear-gradient(90deg, #000 135px, transparent 170px);
}
.tab-x {
  width: 22px;
  height: 22px;
  color: #1f1f1f;
}
.cal-num {
  font: 700 13px Roboto, sans-serif;
  fill: #1967d2;
  text-anchor: middle;
}
.vs-num {
  font: 700 16px Roboto, sans-serif;
  fill: #fff;
  text-anchor: middle;
}
.newtab {
  width: 26px;
  height: 26px;
  margin: 26px 0 0 19px;
}
.tab-more {
  position: absolute;
  right: 12px;
  top: 11px;
  width: 56px;
  height: 56px;
  border-radius: 50%;
  background: #cbdaf5;
  display: flex;
  align-items: center;
  justify-content: center;
}
.tab-more svg {
  width: 24px;
  height: 24px;
}

/* address bar */
.navbar {
  height: 88px;
  flex: none;
  display: flex;
  align-items: center;
  padding: 4px 0 0 27px;
  background: #cbdaf5;
  color: #3c4043;
}
.nav {
  width: 34px;
  height: 34px;
  margin-right: 38px;
}
.nav.faded {
  color: #84909f;
}
.omnibox {
  width: 2792px;
  height: 68px;
  margin-left: -1px;
  margin-right: 38px;
  border-radius: 34px;
  background: #f5f8fe;
  display: flex;
  align-items: center;
  padding-left: 8px;
}
.site-ic {
  width: 52px;
  height: 52px;
  border-radius: 50%;
  background: #cbdaf5;
  display: flex;
  align-items: center;
  justify-content: center;
  margin-right: 12px;
}
.site-ic svg {
  width: 30px;
  height: 30px;
}
.url {
  font-family: Inter, sans-serif;
  font-size: 27.8px;
  color: #1f1f1f;
  flex: 1;
}
.url-path {
  color: #5f6368;
}
.omni-ic {
  width: 34px;
  height: 34px;
  margin-right: 31px;
}
.star-ic {
  color: #3c4043;
  margin-right: 28px;
}
.puzzle {
  margin-right: 37px;
}
.nav-sep {
  width: 2px;
  height: 36px;
  background: #93ade0;
  margin-right: 34px;
}
.nav.dots {
  margin: 0 0 0 35px;
}
.avatar {
  width: 64px;
  height: 64px;
  border-radius: 50%;
  background: #ae4020;
  color: #fff;
  display: flex;
  align-items: center;
  justify-content: center;
  font-size: 34px;
}
.avatar.small {
  width: 40px;
  height: 40px;
  font-size: 22px;
  margin-left: -3px;
}

/* bookmarks */
.bookmarks {
  height: 54px;
  flex: none;
  display: flex;
  align-items: center;
  padding: 10px 0 0 24px;
  background: #cbdaf5;
  font-family: Inter, sans-serif;
  font-size: 23.5px;
  color: #2a2b2e;
  gap: 43px;
  position: relative;
}
.bm {
  display: flex;
  align-items: center;
  gap: 12px;
  white-space: nowrap;
}
.bm-ic {
  width: 32px;
  height: 32px;
}
.bm-more {
  width: 28px;
  height: 28px;
  position: absolute;
  right: 50px;
  top: 18px;
}

/* docs header */
.docs {
  flex: 1;
  min-height: 0;
  display: flex;
  flex-direction: column;
  background: #f9fbfd;
}
.docs-head {
  height: 139px;
  flex: none;
  display: flex;
  padding: 51px 0 0 41px;
  position: relative;
}
.docs-logo {
  width: 54px;
  height: 70px;
}
.docs-titles {
  margin-left: 26px;
  margin-top: -12px;
}
.docs-title {
  height: 50px;
  display: flex;
  align-items: center;
}
.doc-name {
  font-size: 38px;
  color: #1f1f1f;
  width: 132px;
}
.head-ic {
  width: 36px;
  height: 36px;
  margin: 0 12px 0 22px;
  color: #444746;
}
.head-ic + .head-ic {
  margin-right: 16px;
  margin-left: 16px;
}
.docs-menu {
  display: flex;
  gap: 32px;
  margin-top: 8px;
  margin-left: 3px;
  font-size: 28.8px;
  color: #1f1f1f;
}
.head-right {
  position: absolute;
  right: 40px;
  top: 39px;
  display: flex;
  align-items: center;
  height: 80px;
}
.presence {
  width: 64px;
  height: 64px;
  border-radius: 50%;
  background: #d3e3fd;
  display: flex;
  align-items: center;
  justify-content: center;
  margin-right: 42px;
}
.presence svg {
  width: 40px;
  height: 40px;
}
.hr-ic {
  width: 44px;
  height: 44px;
}
.hist {
  margin-right: 56px;
}
.cmt {
  margin-right: 64px;
}
.caret {
  width: 18px;
  height: 10px;
}
.meet-caret {
  margin: 0 46px 0 16px;
}
.share {
  width: 247px;
  height: 80px;
  border-radius: 40px;
  background: #c2e7ff;
  display: flex;
  color: #001d35;
  font-size: 30px;
  font-weight: 500;
  margin-right: 33px;
}
.share-main {
  width: 181px;
  display: flex;
  align-items: center;
  padding-left: 38px;
  border-right: 2px solid #f9fbfd;
  gap: 17px;
}
.share-ic {
  width: 30px;
  height: 30px;
}
.share-arrow {
  flex: 1;
  display: flex;
  align-items: center;
  justify-content: center;
}

/* main row */
.docs-main {
  flex: 1;
  min-height: 0;
  display: flex;
}
.editor {
  width: 2742px;
  flex: none;
  display: flex;
  flex-direction: column;
  min-height: 0;
}
.toolbar {
  width: 2678px;
  height: 80px;
  margin: 10px 0 0 32px;
  flex: none;
  border-radius: 40px;
  background: #edf2fa;
  display: flex;
  align-items: center;
  padding-left: 18px;
  color: #444746;
  font-size: 28px;
}
.menus {
  width: 200px;
  height: 56px;
  border-radius: 28px;
  background: #fff;
  display: flex;
  align-items: center;
  padding-left: 18px;
  gap: 18px;
  color: #444746;
  margin-right: 1px;
}
.menus svg {
  width: 34px;
  height: 34px;
}
.tb {
  width: 64px;
  height: 56px;
  display: flex;
  align-items: center;
  justify-content: center;
}
.tb svg,
.tb-dd svg:first-child {
  width: 36px;
  height: 36px;
}
.tb-text {
  display: flex;
  align-items: center;
  justify-content: space-between;
  padding-left: 19px;
  padding-right: 26px;
  font-size: 30px;
}
.zoom-sel { width: 162px; }
.style-sel { width: 260px; padding-left: 31px; padding-right: 31px; }
.font-sel { width: 211px; padding-left: 31px; padding-right: 32px; }
.tb-dd {
  width: 76px;
  height: 56px;
  display: flex;
  align-items: center;
  padding-left: 2px;
  gap: 10px;
}
.dd-gap { width: 88px; margin-left: 15px; }
.dd-wide { width: 87px; }
.dd-pencil { margin-left: 61px; }
.tb-dots { width: 44px; }
.sep-v {
  width: 2px;
  height: 44px;
  background: #c7c7c7;
  flex: none;
}
.sep-fmt { margin-left: 8px; }
.sep-ins { margin-left: 19px; }
.sep-align { margin-left: 12px; margin-right: 9px; }
.sep-last { margin-left: 51px; margin-right: 6px; }
.tb-sm { width: 62px; }
.size-box {
  width: 66px;
  height: 46px;
  border: 2px solid #747775;
  border-radius: 8px;
  display: flex;
  align-items: center;
  justify-content: center;
  color: #1f1f1f;
  font-size: 26px;
  margin: 0 -1px;
}
.tb-fmt {
  font-size: 32px;
}
.fmt-b { font-weight: 700; }
.fmt-i { font-style: italic; font-family: "Liberation Serif", serif; font-size: 36px; }
.fmt-u { text-decoration: underline; text-underline-offset: 5px; text-decoration-thickness: 3px; }
.fmt-a {
  flex-direction: column;
  font-size: 30px;
  line-height: 32px;
}
.fmt-a::after {
  content: "";
  width: 44px;
  height: 8px;
  background: #000;
}

/* horizontal ruler */
.ruler {
  height: 38px;
  margin: 12px 0 0 32px;
  width: 2678px;
  flex: none;
  border-bottom: 3px solid #c7c7c7;
  position: relative;
}
.ruler-nums {
  display: flex;
  margin-left: 472px;
  color: #444746;
  font-size: 22px;
  height: 20px;
  line-height: 20px;
  padding-top: 2px;
}
.ruler-nums span {
  width: 192px;
  text-align: center;
}
.ruler-ticks {
  position: absolute;
  left: 568px;
  bottom: 0;
  width: 1634px;
  height: 24px;
  background:
    repeating-linear-gradient(90deg, #8f8f8f 0 2px, transparent 2px 96px) 0 100% / 100% 24px no-repeat,
    repeating-linear-gradient(90deg, #a5a5a5 0 2px, transparent 2px 24px) 0 100% / 100% 12px no-repeat;
}
.ruler-active {
  position: absolute;
  left: 762px;
  width: 1246px;
  bottom: -3px;
  height: 3px;
  background: #666;
}
.indent-left,
.indent-right {
  position: absolute;
  bottom: 0;
  width: 0;
  height: 0;
  border: 10px solid transparent;
  border-bottom-width: 0;
  border-top: 14px solid #4a7cf0;
}
.indent-left { left: 752px; }
.indent-left::before {
  content: "";
  position: absolute;
  left: -12px;
  top: -26px;
  width: 24px;
  height: 10px;
  background: #4a7cf0;
}
.indent-right { left: 1998px; }

/* workspace */
.workspace {
  flex: 1;
  min-height: 0;
  display: flex;
  overflow: hidden;
  position: relative;
}
.vruler {
  width: 32px;
  flex: none;
  border-right: 2px solid #c7c7c7;
  position: relative;
}
.vruler::before {
  content: "";
  position: absolute;
  left: 10px;
  width: 20px;
  top: 336px;
  bottom: 0;
  background:
    repeating-linear-gradient(180deg, #8a8a8a 0 2px, transparent 2px 96px) 100% 0 / 20px 100% no-repeat,
    repeating-linear-gradient(180deg, #a5a5a5 0 2px, transparent 2px 24px) 100% 0 / 8px 100% no-repeat;
}
.vruler::after {
  content: "";
  position: absolute;
  right: -2px;
  width: 2px;
  top: 528px;
  bottom: 0;
  background: #666;
}
.vruler-nums {
  padding-top: 246px;
  color: #444746;
  font-size: 22px;
  position: relative;
}
.vruler-nums span {
  display: block;
  height: 192px;
  line-height: 192px;
  width: 16px;
}
.vruler-nums b {
  display: inline-block;
  font-weight: 400;
  transform: rotate(-90deg);
}
.outline {
  width: 568px;
  flex: none;
  display: flex;
  flex-direction: column;
  min-height: 0;
  font-size: 28.8px;
  color: #444746;
}
.outline-head {
  height: 110px;
  flex: none;
  padding: 34px 0 0 50px;
  position: relative;
  z-index: 1;
  background: #f9fbfd;
  box-shadow: 0 6px 8px -4px rgba(60,64,67,.15);
  margin-right: 24px;
}
.outline-head svg {
  width: 40px;
  height: 40px;
}
.outline-list {
  list-style: none;
  margin: -35px 0 0;
  padding: 0;
}
.outline-list li {
  height: 64px;
  line-height: 64px;
  white-space: nowrap;
  position: relative;
}
.l1 { padding-left: 49px; font-weight: 500; font-size: 30px; }
.l2 { padding-left: 112px; }
.l3 { padding-left: 145px; }
.outline-list .current {
  color: #0b57d0;
}
.outline-list .current::before {
  content: "";
  position: absolute;
  left: 18px;
  top: 30px;
  width: 18px;
  height: 4px;
  background: #0b57d0;
}

/* pages */
.pages {
  width: 1634px;
  flex: none;
  min-height: 0;
  overflow: hidden;
}
.page {
  background: #fff;
  border: 2px solid #c7c7c7;
  padding: 0 192px;
}
.page-one {
  height: 322px;
  border-top: 0;
  padding-top: 6px;
}
.page-two {
  margin-top: 16px;
  padding-top: 209px;
  width: 1634px;
}
.body-text {
  margin: 0;
  font-family: "Liberation Sans", sans-serif;
  font-size: 29.33px;
  line-height: 40px;
  color: #000;
}
.body-text a {
  color: #1155cc;
}
.text-cursor {
  display: inline-block;
  width: 3px;
  height: 34px;
  background: #000;
  vertical-align: -7px;
}
.diagram {
  margin-left: 25px;
  font-family: "DejaVu Sans Mono", monospace;
  font-size: 20.3px;
}
.dg-log {
  margin: 0;
  font: inherit;
  line-height: 25.3px;
  color: #222;
}
.dg-input {
  margin: 23px 0 0 12px;
  height: 24px;
  line-height: 24px;
  color: #2e7d22;
}
.dg-head {
  display: flex;
}
.dg-head em {
  color: #bdbdbd;
  line-height: 24px;
  white-space: nowrap;
}
.dg-corner {
  width: 33px;
  height: 16px;
  border: solid #bdbdbd;
  border-width: 0 0 5px 5px;
  flex: none;
}
.dg-head-a {
  height: 33px;
  margin-left: 3px;
}
.dg-head-a em {
  margin-left: 243px;
}
.dg-head-b {
  height: 36px;
  margin: 8px 0 0 52px;
}
.dg-head-b em {
  margin-left: 343px;
  color: #2e7d22;
  margin-top: 1px;
}
.dg-table {
  border-collapse: collapse;
  table-layout: fixed;
  margin-left: 53px;
}
.dg-table th,
.dg-table td {
  height: 47px;
  padding: 0 0 0 17px;
  font-weight: 400;
  text-align: left;
  white-space: nowrap;
}
.dg-table th {
  color: #1c1c8f;
  border: 3px solid;
}
.dg-table td {
  border: 2px solid;
}
.dg-gray { width: 636px; }
.dg-gray th, .dg-gray td { border-color: #c6c6c6; }
.dg-gray td { color: #bbb; }
.dg-green { width: 772px; margin-left: 102px; }
.dg-green th, .dg-green td { border-color: #2e7d22; }
.dg-green td { color: #2e7d22; }
.ca1 { width: 136px; }
.ca2 { width: 196px; }
.ca3 { width: 122px; }
.ca4 { width: 182px; }
.cb1 { width: 270px; }
.cb2 { width: 196px; }
.cb3 { width: 160px; }
.cb4 { width: 146px; }
.doc-h2 {
  margin: 74px 0 0;
  font-family: "Liberation Sans", sans-serif;
  font-size: 42.67px;
  font-weight: 400;
  line-height: 57px;
  color: #000;
}
.doc-h2 span {
  background: #ff0;
}
.visit {
  margin-top: 53px;
}
.doc-table {
  border-collapse: collapse;
  table-layout: fixed;
  width: 1438px;
  margin-top: 121px;
  font-family: "Liberation Sans", sans-serif;
  font-size: 42.67px;
}
.doc-table td {
  border: 2px solid #000;
  padding: 14px 12px;
  line-height: 49px;
  vertical-align: top;
}
.cd1 { width: 268px; }
.cd2 { width: 212px; }
.cd3 { width: 308px; }
.cd4 { width: 650px; }
.doc-thumb {
  position: absolute;
  left: 2720px;
  top: 458px;
  width: 14px;
  height: 40px;
  border-radius: 7px;
  background: #dadce0;
}
.hscroll {
  height: 32px;
  flex: none;
  padding: 8px 0 0 5px;
}
.hscroll i {
  display: block;
  width: 2555px;
  height: 16px;
  border-radius: 8px;
  background: #d5d7da;
}

/* docs to markdown panel */
.addon {
  width: 602px;
  flex: none;
  background: #fff;
  border-left: 2px solid #dadce0;
  display: flex;
  flex-direction: column;
  min-height: 0;
  margin-top: 1px;
  font-family: "Liberation Sans", sans-serif;
  color: #202124;
  overflow: hidden;
}
.addon-head {
  height: 72px;
  flex: none;
  background: #666;
  color: #fff;
  display: flex;
  align-items: center;
  justify-content: space-between;
  padding: 0 24px 0 26px;
  font-size: 26px;
  font-weight: 700;
}
.addon-head svg {
  width: 26px;
  height: 26px;
}
.addon-opts {
  padding: 27px 0 0 18px;
  font-size: 26px;
}
.addon-opts label {
  display: flex;
  align-items: center;
  height: 39px;
  gap: 22px;
}
.addon-opts i {
  width: 26px;
  height: 26px;
  border: 2px solid #ccc;
  border-radius: 2px;
}
.addon-links {
  margin: 27px 0 0 16px;
  font-size: 26px;
  line-height: 30px;
  height: 30px;
  color: #1a3fcf;
}
.addon-links a {
  color: #1a3fcf;
  text-decoration: underline;
  text-decoration-thickness: 1px;
}
.addon-output {
  margin: 3px 0 26px 16px;
  width: 564px;
  flex: 1;
  min-height: 0;
  border: 2px solid #c4c4c4;
  position: relative;
  overflow: hidden;
}
.addon-output pre {
  margin: -18px 0 0;
  padding-left: 9px;
  font-family: "Liberation Mono", monospace;
  font-size: 26px;
  line-height: 30px;
  color: #1a1a1a;
}
.grammarly {
  position: absolute;
  right: 24px;
  bottom: 72px;
  width: 44px;
  height: 44px;
}
.grip {
  position: absolute;
  right: 0;
  bottom: 0;
  width: 16px;
  height: 16px;
}
.side-strip {
  flex: 1;
  display: flex;
  flex-direction: column;
  align-items: center;
  padding-top: 39px;
  position: relative;
}
.side-strip svg {
  width: 36px;
  height: 36px;
  margin-bottom: 76px;
}
.side-strip .strip-plus {
  margin-top: 68px;
}
.side-strip .strip-chev {
  margin-top: 792px;
  width: 28px;
  height: 28px;
}

/* desktop + dock */
.desktop {
  flex: 1;
  min-height: 0;
  position: relative;
  padding: 22px 0 0 86px;
}
.wall {
  position: absolute;
  inset: 0;
  width: 100%;
  height: 100%;
}
.dock {
  position: relative;
  width: 3285px;
  height: 123px;
  border-radius: 40px;
  border: 2px solid rgba(255,255,255,.22);
  background: linear-gradient(90deg, #20122f 0%, #201338 35%, #2f1358 52%, #46166f 68%, #461670 76%, #2f1255 92%, #25103f 100%);
  display: flex;
  align-items: flex-start;
  padding: 17px 0 0 14px;
  gap: 26.7px;
}
.app {
  width: 76px;
  height: 76px;
  flex: none;
  position: relative;
}
.app > svg {
  width: 76px;
  height: 76px;
  border-radius: 18px;
}
.app.dot::after {
  content: "";
  position: absolute;
  left: 35px;
  top: 91px;
  width: 6px;
  height: 6px;
  border-radius: 50%;
  background: #b69ad9;
}
.app-bare > svg {
  border-radius: 0;
}
.badge {
  position: absolute;
  right: -14px;
  top: -9px;
  width: 36px;
  height: 36px;
  border-radius: 50%;
  background: #e64c3e;
  color: #fff;
  font-family: Inter, sans-serif;
  font-size: 21px;
  display: flex;
  align-items: center;
  justify-content: center;
}
.dock-sep {
  width: 2px;
  height: 92px;
  flex: none;
  margin: 0 8px;
  background: rgba(255,255,255,.25);
}
.dk-feb {
  font: 500 14px Roboto, sans-serif;
  fill: #fff;
  text-anchor: middle;
}
.dk-day {
  font: 300 44px Roboto, sans-serif;
  fill: #1b1b1b;
  text-anchor: middle;
}
.dk-tv {
  font: 500 32px Roboto, sans-serif;
  fill: #fff;
  text-anchor: middle;
}
.dk-notion {
  font: 700 46px "Liberation Serif", serif;
  fill: #111;
  text-anchor: middle;
}
.sep-r {
  margin-right: 20px;
}
.recents {
  display: flex;
  align-items: flex-start;
  gap: 14px;
  flex: none;
}
.pdf-doc {
  width: 60px;
  height: 87px;
  margin: -6px 9px 0 -2px;
  background: #f3f3f3;
  clip-path: polygon(0 0, 65% 0, 100% 25%, 100% 100%, 0 100%);
  display: flex;
  flex-direction: column;
  padding: 12px 4px;
  font-family: "Liberation Sans", sans-serif;
  color: #555;
}
.pdf-name {
  font-size: 9px;
  font-weight: 700;
  color: #222;
}
.pdf-lines {
  flex: 1;
  margin: 6px 0;
  background: repeating-linear-gradient(180deg, #cfcfcf 0 1px, transparent 1px 4px);
}
.pdf-label {
  font-size: 11px;
  text-align: center;
}
.thumb {
  width: 88px;
  position: relative;
  flex: none;
}
.thumb-web {
  width: 90px;
  height: 52px;
  margin-top: 14px;
  background:
    linear-gradient(#888, #888) 12px 26px / 24px 14px no-repeat,
    repeating-linear-gradient(180deg, #ccc 0 1px, transparent 1px 5px) 40px 18px / 46px 30px no-repeat,
    linear-gradient(180deg, #333 0 6px, #eee 6px 12px, #fff 12px);
}
.thumb-dark {
  height: 66px;
  margin-top: 5px;
  background:
    repeating-linear-gradient(180deg, #6a6a6a 0 1px, transparent 1px 5px) 8px 14px / 40px 44px no-repeat,
    #111;
}
.thumb-badge {
  position: absolute;
  right: 1px;
  bottom: -9px;
  width: 30px;
  height: 30px;
}
.trash {
  width: 66px;
  height: 88px;
  flex: none;
  margin: -9px 0 0 7px;
}
.trash svg {
  width: 66px;
  height: 88px;
}
```
